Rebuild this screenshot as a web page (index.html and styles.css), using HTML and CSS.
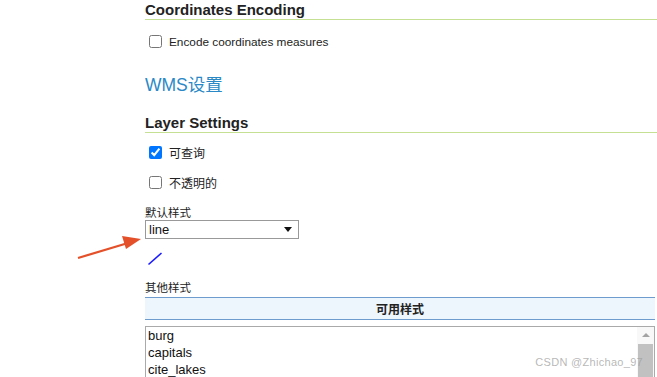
FILE: index.html
```html
<!DOCTYPE html>
<html lang="en">
<head>
    <meta charset="UTF-8">
    <meta name="viewport" content="width=device-width, initial-scale=1.0">
    <title>Layer settings</title>
    <link rel="stylesheet" href="styles.css">
</head>
<body>
    <div class="page">
        <h3 class="section-title">Coordinates Encoding</h3>
        <div class="check-row">
            <input type="checkbox" id="encodeMeasures">
            <label for="encodeMeasures">Encode coordinates measures</label>
        </div>

        <h2 class="group-title">WMS设置</h2>

        <h3 class="section-title">Layer Settings</h3>
        <div class="check-row cjk">
            <input type="checkbox" id="queryable" checked>
            <label for="queryable">可查询</label>
        </div>
        <div class="check-row cjk">
            <input type="checkbox" id="opaque">
            <label for="opaque">不透明的</label>
        </div>

        <div class="field-label">默认样式</div>
        <div class="select-box">
            <span>line</span>
            <span class="caret"></span>
        </div>

        <div class="style-preview">
            <svg width="16" height="14" viewBox="0 0 16 14">
                <line x1="1.5" y1="12.5" x2="14.5" y2="1" stroke="#1a1aff" stroke-width="1.6"/>
            </svg>
        </div>

        <div class="field-label">其他样式</div>
        <table class="styles-table">
            <thead>
                <tr><th>可用样式</th></tr>
            </thead>
        </table>

        <div class="list-box">
            <ul class="list-items">
                <li>burg</li>
                <li>capitals</li>
                <li>cite_lakes</li>
            </ul>
            <div class="scrollbar">
                <div class="scroll-up"></div>
                <div class="scroll-thumb"></div>
            </div>
            <span class="watermark">CSDN @Zhichao_97</span>
        </div>
    </div>

    <svg class="pointer-arrow" width="80" height="40" viewBox="0 0 80 40">
        <line x1="2" y1="28" x2="52" y2="13" stroke="#e4502a" stroke-width="2.2"/>
        <polygon points="65,9 46,6 50,19" fill="#e4502a"/>
    </svg>
</body>
</html>
```

FILE: styles.css
```css
body {
    margin: 0;
    background: #fff;
    color: #222;
    font-family: "Liberation Sans", Arial, "Noto Sans CJK SC", sans-serif;
    font-size: 12px;
}

.page {
    position: relative;
    margin-left: 145px;
    width: 510px;
}

.section-title {
    margin: 1px -2px 0 0;
    padding: 0;
    font-size: 15px;
    line-height: 18px;
    font-weight: bold;
    color: #222;
    border-bottom: 1px solid #c5e093;
}

.check-row {
    display: flex;
    align-items: center;
    height: 19px;
    margin-top: 12px;
    font-size: 11.8px;
}

.check-row input {
    margin: 0 7px 0 4px;
    width: 13px;
    height: 13px;
}

.cjk {
    font-family: "Noto Sans CJK SC", sans-serif;
    font-size: 12px;
}

.group-title {
    margin: 22px 0 0;
    font-size: 17.5px;
    line-height: 24px;
    font-weight: normal;
    color: #2a88c6;
}

.page .group-title + .section-title {
    margin-top: 17px;
}

.section-title + .check-row.cjk {
    margin-top: 10px;
}

.check-row.cjk + .check-row.cjk {
    margin-top: 11px;
}

.field-label {
    font-family: "Noto Sans CJK SC", sans-serif;
    font-size: 11.5px;
    line-height: 14px;
    margin-top: 13px;
}

.select-box {
    display: flex;
    align-items: center;
    justify-content: space-between;
    width: 143px;
    height: 17px;
    margin-top: 1px;
    border: 1px solid #999;
    padding: 0 6px 0 3px;
    font-family: "Liberation Sans", Arial, sans-serif;
    font-size: 13px;
    color: #111;
}

.caret {
    width: 0;
    height: 0;
    border-left: 4px solid transparent;
    border-right: 4px solid transparent;
    border-top: 5px solid #111;
}

.style-preview {
    height: 14px;
    margin: 13px 0 0 2px;
}

.style-preview svg {
    display: block;
}

.style-preview + .field-label {
    margin-top: 14px;
}

.styles-table {
    width: 510px;
    border-collapse: collapse;
    margin-top: 3px;
}

.styles-table th {
    height: 21px;
    padding: 0;
    background: #edf5fd;
    border-top: 1px solid #6f9ccf;
    border-bottom: 1px solid #6f9ccf;
    font-family: "Noto Sans CJK SC", sans-serif;
    font-size: 12px;
    font-weight: bold;
    color: #222;
    text-align: center;
}

.list-box {
    position: relative;
    display: flex;
    margin-top: 6px;
    height: 60px;
    border: 1px solid #aaa;
    border-bottom: none;
    overflow: hidden;
}

.list-items {
    flex-grow: 1;
    list-style-type: none;
    margin: 0;
    padding: 0 2px;
    font-family: "Liberation Sans", Arial, sans-serif;
    font-size: 13px;
    line-height: 17px;
    color: #111;
}

.scrollbar {
    width: 17px;
    display: flex;
    flex-direction: column;
    align-items: center;
    background: #f8f8f8;
}

.scroll-up {
    width: 0;
    height: 0;
    margin: 6px 0 7px;
    border-left: 4px solid transparent;
    border-right: 4px solid transparent;
    border-bottom: 4px solid #a3a3a3;
}

.scroll-thumb {
    width: 15px;
    flex-grow: 1;
    background: #c1c1c1;
}

.watermark {
    position: absolute;
    right: 11px;
    top: 29px;
    font-family: "Liberation Sans", Arial, sans-serif;
    font-size: 11px;
    letter-spacing: 0.3px;
    color: rgba(160, 160, 160, 0.75);
}

.pointer-arrow {
    position: absolute;
    left: 76px;
    top: 230px;
}
```
